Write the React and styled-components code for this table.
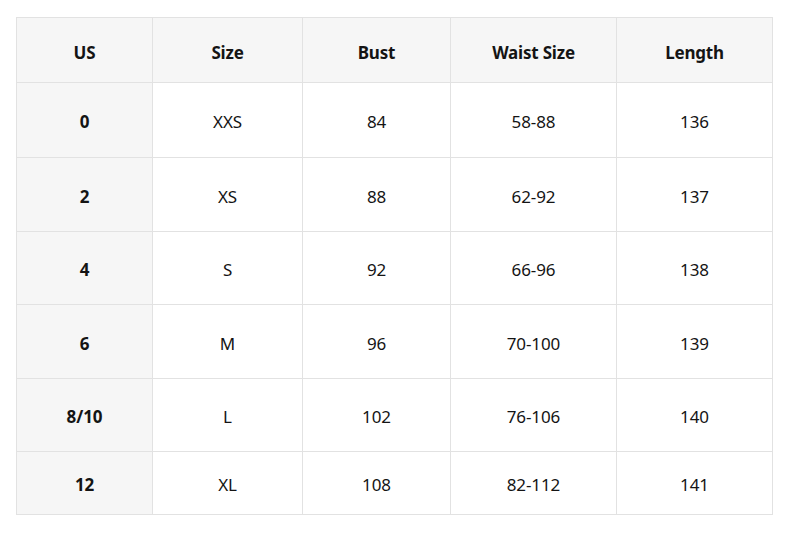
import React from "react";
import styled, { createGlobalStyle } from "styled-components";

const Global = createGlobalStyle`
  html, body { margin: 0; padding: 0; background: #ffffff; }
  body { font-family: "Noto Sans", "Open Sans", sans-serif; color: #141414; }
`;

const Page = styled.div`
  padding: 17px 0 0 16px;
`;

const Table = styled.table`
  width: 756px;
  border-collapse: collapse;
  table-layout: fixed;
  border: 1px solid #e2e2e2;
`;

const HeadCell = styled.th`
  height: 60px;
  padding: 4px 0 0;
  background: #f6f6f6;
  border: 1px solid #e2e2e2;
  font-size: 17px;
  letter-spacing: -0.2px;
  font-weight: 700;
  text-align: center;
  vertical-align: middle;
`;

const Cell = styled.td`
  height: ${(p) => p.$h - 3}px;
  padding: 3px 0 0;
  border: 1px solid #e2e2e2;
  background: ${(p) => (p.$first ? "#f6f6f6" : "#ffffff")};
  font-size: 17px;
  letter-spacing: -0.1px;
  font-weight: ${(p) => (p.$first ? 700 : 400)};
  text-align: center;
  vertical-align: middle;
`;

const widths = [136, 150, 148, 166, 156];
const headers = ["US", "Size", "Bust", "Waist Size", "Length"];
const rows = [
  ["0", "XXS", "84", "58-88", "136"],
  ["2", "XS", "88", "62-92", "137"],
  ["4", "S", "92", "66-96", "138"],
  ["6", "M", "96", "70-100", "139"],
  ["8/10", "L", "102", "76-106", "140"],
  ["12", "XL", "108", "82-112", "141"],
];
const heights = [74, 73, 72, 73, 72, 62];

export default function App() {
  return (
    <>
      <Global />
      <Page>
        <Table>
          <colgroup>
            {widths.map((w, i) => (
              <col key={i} style={{ width: w }} />
            ))}
          </colgroup>
          <thead>
            <tr>
              {headers.map((h) => (
                <HeadCell key={h}>{h}</HeadCell>
              ))}
            </tr>
          </thead>
          <tbody>
            {rows.map((r, ri) => (
              <tr key={ri}>
                {r.map((c, ci) => (
                  <Cell key={ci} $first={ci === 0} $h={heights[ri]}>
                    {c}
                  </Cell>
                ))}
              </tr>
            ))}
          </tbody>
        </Table>
      </Page>
    </>
  );
}
